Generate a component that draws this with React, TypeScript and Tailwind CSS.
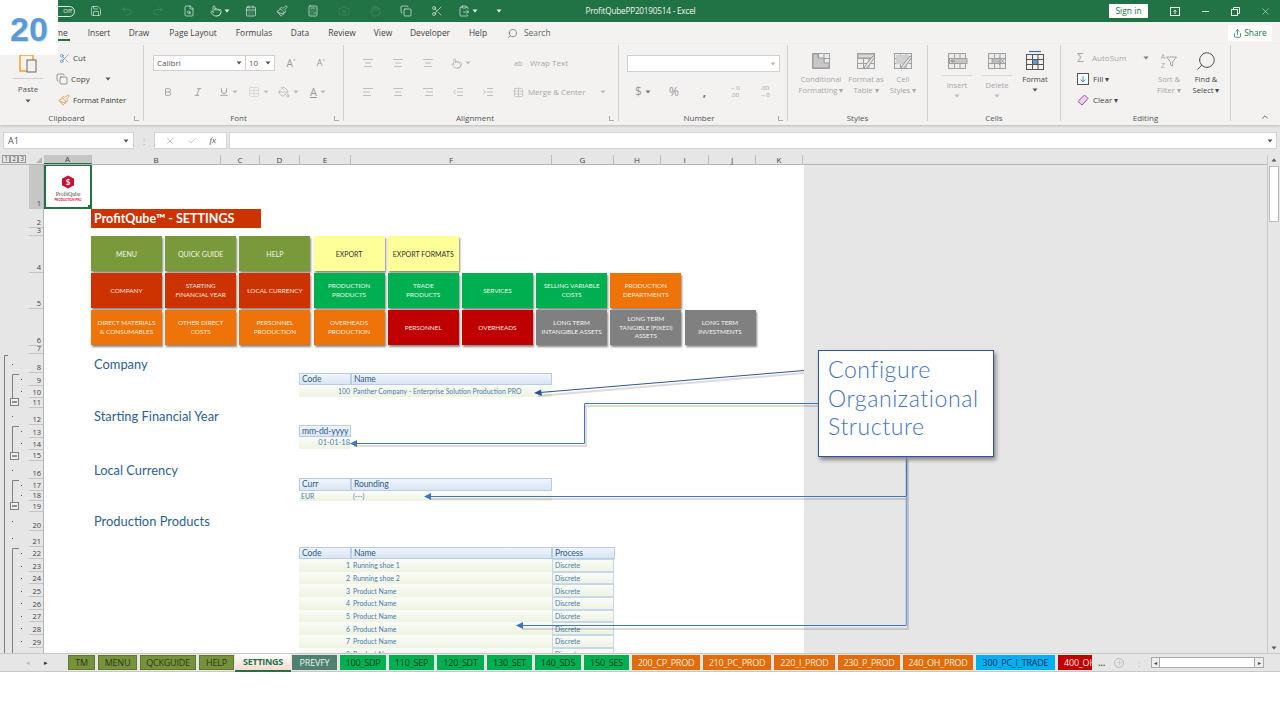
import React from "react";
import {
  Save, Undo2, Redo2, FileSearch, Pointer, CalendarDays, Paintbrush, Calculator, Camera, Hand, Copy, Scissors,
  ClipboardPaste, Search, Share, X, Check, AlignLeft, AlignCenter, AlignRight, Indent, Outdent,
  Table, Bold, Italic, Underline, PaintBucket, Plus, ChevronUp,
} from "lucide-react";

const Caret = ({ c = "#777" }: { c?: string }) => (
  <svg width="6" height="4" viewBox="0 0 6 4"><path d="M0.5 0.5h5L3 3.5z" fill={c} /></svg>
);

const qat: [React.ElementType, string][] = [
  [Save, "#e8f2ec"], [Undo2, "#4b8a68"], [Redo2, "#4b8a68"], [FileSearch, "#e8f2ec"], [Pointer, "#e8f2ec"],
  [CalendarDays, "#e8f2ec"], [Paintbrush, "#e8f2ec"], [Calculator, "#e8f2ec"], [Camera, "#4b8a68"], [Hand, "#4b8a68"],
  [Copy, "#e8f2ec"], [Scissors, "#e8f2ec"], [ClipboardPaste, "#e8f2ec"],
];

const ribbonTabs: [string, string][] = [
  ["Home", "w-[46px]"], ["Insert", "w-[40px]"], ["Draw", "w-[40px]"], ["Page Layout", "w-[68px]"], ["Formulas", "w-[54px]"],
  ["Data", "w-[38px]"], ["Review", "w-[46px]"], ["View", "w-[36px]"], ["Developer", "w-[58px]"], ["Help", "w-[38px]"],
];

const Grid = ({ children, stroke = "#a0a0a0", fill = "#ececec" }: { children?: React.ReactNode; stroke?: string; fill?: string }) => (
  <svg width="22" height="20" viewBox="0 0 22 20" fill="none" stroke={stroke} strokeWidth="1">
    <rect x="2.5" y="2.5" width="17" height="15" fill={fill} />
    <path d="M2.5 7.5h17M2.5 12.5h17M8.5 2.5v15M14 2.5v15" />
    {children}
  </svg>
);
const IconCond = () => <Grid><path d="M3 3h5v4h6v5h5v5H3z" fill="#c8c8c8" stroke="#9a9a9a" /></Grid>;
const IconTable = () => <Grid><path d="M3 3h16v4H3z" fill="#d8d8d8" /><path d="M20 6l-8 11-3 1 1-3 8-10z" fill="#e4e4e4" stroke="#9a9a9a" /></Grid>;
const IconCell = () => <Grid><path d="M4 4h13v9H4z" fill="#d0d0d0" stroke="none" /><path d="M20 6l-8 11-3 1 1-3 8-10z" fill="#e4e4e4" stroke="#9a9a9a" /></Grid>;
const IconInsert = () => <Grid><rect x="6" y="7.5" width="15" height="5" fill="#c4c4c4" /><path d="M9 10H2M4 8l-2 2 2 2" stroke="#8a8a8a" /></Grid>;
const IconDelete = () => <Grid><rect x="6" y="7.5" width="8" height="5" fill="#bcbcbc" /><path d="M13 6l7 8M20 6l-7 8" stroke="#9a9a9a" /></Grid>;
const IconFormat = () => (
  <svg width="22" height="22" viewBox="0 0 22 22" fill="none" stroke="#555" strokeWidth="1">
    <path d="M5 1.5h12" stroke="#2f75b5" strokeWidth="1.2" />
    <rect x="2.5" y="4.5" width="17" height="15" fill="#f3f2f1" />
    <rect x="8.5" y="9" width="5.5" height="5" fill="#5b9bd5" stroke="none" />
    <path d="M2.5 9.5h17M2.5 14.5h17M8.5 4.5v15M14 4.5v15" />
  </svg>
);

function Group({ w, label, launcher, pr = "", children }: { w: string; label: string; launcher?: boolean; pr?: string; children: React.ReactNode }) {
  return (
    <div className={`${w} flex h-[80px] shrink-0`}>
      <div className="flex-1 min-w-0 flex flex-col relative">
        <div className="flex-1 min-h-0 flex">{children}</div>
        <div className={`h-[13px] flex items-center justify-center text-[8px] text-[#555] ${pr}`}>{label}</div>
        {launcher && <span className="absolute right-[4px] bottom-[3px] w-[5px] h-[5px] border-l border-b border-[#aaa]" />}
      </div>
      <div className="w-px h-[76px] mt-[1px] bg-[#d2d0ce]" />
    </div>
  );
}

function Slot({ w = "w-[30px]", children }: { w?: string; children: React.ReactNode }) {
  return <div className={`${w} h-[16px] flex items-center justify-center gap-[3px] shrink-0 text-[#9a9a9a]`}>{children}</div>;
}

function BigCmd({ w, lines, children, dark, caretOnly }: { w: string; lines: string[]; children: React.ReactNode; dark?: boolean; caretOnly?: boolean }) {
  return (
    <div className={`${w} flex flex-col items-center shrink-0 pt-[7px] text-[7.6px] leading-[10.5px] ${dark ? "text-[#444]" : "text-[#a6a6a6]"}`}>
      <div className="h-[20px] flex items-center">{children}</div>
      <div className="mt-[3px] flex flex-col items-center whitespace-nowrap">
        {lines.map((l) => <span key={l}>{l}</span>)}
        {caretOnly && <span className="mt-[3px]"><Caret c={dark ? "#555" : "#bbb"} /></span>}
      </div>
    </div>
  );
}

const Ribbon = () => (
  <div className="h-[81px] bg-[#f3f2f1] flex pr-[8px] text-[#555] shadow-[0_1px_2px_#bbb] relative">
    <Group w="w-[144px]" label="Clipboard" launcher pr="pr-[10px]">
      <div className="w-[56px] flex flex-col items-center pt-[9px] text-[8px] text-[#555]">
        <svg width="20" height="20" viewBox="0 0 20 20" fill="none"><rect x="2" y="2" width="13" height="16" stroke="#e8a33d" strokeWidth="1.5" fill="#faf3e6" /><rect x="9" y="7" width="9" height="12" stroke="#666" fill="#f3f2f1" /></svg>
        <div className="w-[30px] border-t border-[#d2d0ce] mt-[5px]" />
        <span className="mt-[4px]">Paste</span>
        <span className="mt-[4px]"><Caret c="#555" /></span>
      </div>
      <div className="flex flex-col pt-[7px] text-[8px] text-[#444] gap-[7px]">
        <div className="h-[14px] flex items-center gap-[3px] pl-[3px]"><Scissors size={11} strokeWidth={1.3} color="#3a7ab8" /><span>Cut</span></div>
        <div className="h-[14px] flex items-center gap-[3px]"><Copy size={12} strokeWidth={1.2} color="#555" /><span>Copy</span><span className="ml-[12px]"><Caret c="#555" /></span></div>
        <div className="h-[14px] flex items-center gap-[3px] pl-[2px]"><Paintbrush size={12} strokeWidth={1.4} color="#d98a2b" /><span className="tracking-[-0.2px]">Format Painter</span></div>
      </div>
    </Group>
    <Group w="w-[200px]" label="Font" launcher pr="pr-[10px]">
      <div className="flex flex-col pl-[9px] pt-[11px]">
        <div className="flex items-center h-[16px]">
          <div className="w-[93px] h-[16px] bg-white border border-[#d0d0d0] flex items-center justify-between px-[3px] text-[8px] text-[#555]">Calibri<Caret c="#555" /></div>
          <div className="w-[29px] h-[16px] bg-white border border-l-0 border-[#d0d0d0] flex items-center justify-between px-[3px] text-[8px] text-[#555]">10<Caret c="#555" /></div>
          <div className="w-[1px]" />
          <Slot><span className="text-[10px]">A˄</span></Slot>
          <Slot><span className="text-[9px]">A˅</span></Slot>
        </div>
        <div className="flex items-center h-[16px] mt-[13px]">
          <Slot><Bold size={10} strokeWidth={2} /></Slot>
          <Slot><Italic size={10} /></Slot>
          <Slot><Underline size={10} /><Caret c="#bbb" /></Slot>
          <Slot><Table size={12} strokeWidth={1} color="#c5c5c5" /><Caret c="#bbb" /></Slot>
          <Slot><PaintBucket size={12} strokeWidth={1.2} /><Caret c="#bbb" /></Slot>
          <Slot><span className="text-[11px] underline">A</span><Caret c="#bbb" /></Slot>
        </div>
      </div>
    </Group>
    <Group w="w-[275px]" label="Alignment" launcher pr="pr-[12px]">
      <div className="flex flex-col pl-[9px] pt-[11px] text-[8px] text-[#a6a6a6]">
        <div className="flex items-center h-[16px]">
          <Slot><AlignCenter size={12} strokeWidth={1.2} /></Slot>
          <Slot><AlignCenter size={12} strokeWidth={1.2} /></Slot>
          <Slot><AlignCenter size={12} strokeWidth={1.2} /></Slot>
          <Slot w="w-[36px]"><Pointer size={11} strokeWidth={1.2} /><Caret c="#bbb" /></Slot>
          <div className="ml-[35px] flex items-center gap-[2px]"><span className="w-[14px] text-[7px] leading-[7px]">ab</span><span>Wrap Text</span></div>
        </div>
        <div className="flex items-center h-[16px] mt-[13px]">
          <Slot><AlignLeft size={12} strokeWidth={1.2} /></Slot>
          <Slot><AlignCenter size={12} strokeWidth={1.2} /></Slot>
          <Slot><AlignRight size={12} strokeWidth={1.2} /></Slot>
          <Slot><Outdent size={12} strokeWidth={1.2} /></Slot>
          <Slot><Indent size={12} strokeWidth={1.2} /></Slot>
          <div className="ml-[10px] flex items-center gap-[4px]"><Table size={11} strokeWidth={1.1} /><span className="tracking-[-0.1px]">Merge &amp; Center</span><span className="ml-[11px]"><Caret c="#bbb" /></span></div>
        </div>
      </div>
    </Group>
    <Group w="w-[169px]" label="Number" launcher pr="pr-[8px]">
      <div className="flex flex-col pl-[8px] pt-[11px]">
        <div className="w-[153px] h-[17px] bg-white border border-[#d0d0d0] flex items-center justify-end pr-[3px]"><Caret c="#bbb" /></div>
        <div className="flex items-center h-[16px] mt-[12px] text-[#a6a6a6] text-[12px]">
          <Slot w="w-[32px]"><span>$</span><Caret c="#777" /></Slot>
          <Slot w="w-[30px]"><span>%</span></Slot>
          <Slot w="w-[31px]"><span className="font-bold text-[#777]">,</span></Slot>
          <Slot w="w-[30px]"><span className="text-[6px] leading-[7px] text-center">←0<br />.00</span></Slot>
          <Slot w="w-[30px]"><span className="text-[6px] leading-[7px] text-center">.00<br />→0</span></Slot>
        </div>
      </div>
    </Group>
    <Group w="w-[140px]" label="Styles">
      <BigCmd w="w-[56px] ml-[5px]" lines={["Conditional", "Formatting ▾"]}><IconCond /></BigCmd>
      <BigCmd w="w-[34px]" lines={["Format as", "Table ▾"]}><IconTable /></BigCmd>
      <BigCmd w="w-[40px]" lines={["Cell", "Styles ▾"]}><IconCell /></BigCmd>
    </Group>
    <Group w="w-[133px]" label="Cells">
      <div className="w-[40px] ml-[9px] flex flex-col items-center pt-[7px] text-[7.6px] text-[#a6a6a6]">
        <IconInsert /><div className="w-[30px] border-t border-[#d8d8d8] mt-[4px]" /><span className="mt-[4px]">Insert</span><span className="mt-[3px]"><Caret c="#bbb" /></span>
      </div>
      <div className="w-[40px] flex flex-col items-center pt-[7px] text-[7.6px] text-[#a6a6a6]">
        <IconDelete /><div className="w-[30px] border-t border-[#d8d8d8] mt-[4px]" /><span className="mt-[4px]">Delete</span><span className="mt-[3px]"><Caret c="#bbb" /></span>
      </div>
      <BigCmd w="w-[36px]" lines={["Format"]} dark caretOnly><IconFormat /></BigCmd>
    </Group>
    <Group w="w-[170px]" label="Editing">
      <div className="w-[95px] pl-[16px] pt-[7px] flex flex-col gap-[7px] text-[8px]">
        <div className="h-[14px] flex items-center gap-[3px] text-[#a6a6a6]"><span className="text-[12px] w-[12px]">Σ</span><span>AutoSum</span><span className="ml-[14px]"><Caret c="#777" /></span></div>
        <div className="h-[14px] flex items-center gap-[4px] text-[#444]">
          <svg width="12" height="12" viewBox="0 0 12 12" fill="none"><rect x="0.5" y="0.5" width="11" height="11" stroke="#555" fill="#fff" /><path d="M6 3v6M3.5 6.5L6 9l2.5-2.5" stroke="#2f9ae0" /></svg>
          <span>Fill ▾</span>
        </div>
        <div className="h-[14px] flex items-center gap-[4px] text-[#444]">
          <svg width="12" height="12" viewBox="0 0 12 12" fill="none"><path d="M7.5 1l3.5 3.5-6 6.5L1 7.5z" fill="#efd6f0" stroke="#a349a4" /></svg>
          <span>Clear ▾</span>
        </div>
      </div>
      <BigCmd w="w-[26px]" lines={["Sort &", "Filter ▾"]}>
        <span className="flex items-center gap-[1px] text-[#a6a6a6]">
          <span className="text-[7px] leading-[9px] text-center">A<br />Z</span>
          <svg width="11" height="11" viewBox="0 0 11 11" fill="none" stroke="#a6a6a6"><path d="M0.5 1h10L6.5 6v4l-2-1V6z" /></svg>
        </span>
      </BigCmd>
      <BigCmd w="w-[48px]" lines={["Find &", "Select ▾"]} dark><Search size={22} strokeWidth={1} className="-scale-x-100" color="#444" /></BigCmd>
    </Group>
    <div className="flex-1 flex items-end justify-end pb-[3px] pr-[2px]"><ChevronUp size={10} color="#555" /></div>
  </div>
);

const colHeads: [string, string, boolean?][] = [
  ["A", "w-[48px]", true], ["B", "w-[129px]"], ["C", "w-[39px]"], ["D", "w-[40px]"], ["E", "w-[51px]"], ["F", "w-[201px]"],
  ["G", "w-[62px]"], ["H", "w-[47px]"], ["I", "w-[48px]"], ["J", "w-[47px]"], ["K", "w-[47px]"],
];

const rows: [string, string][] = [
  ["1", "h-[44px]"], ["2", "h-[19px]"], ["3", "h-[8px]"], ["4", "h-[36.5px]"], ["5", "h-[36.5px]"], ["6", "h-[36.5px]"], ["7", "h-[8.5px]"],
  ["8", "h-[19px]"], ["9", "h-[13px]"], ["10", "h-[12px]"], ["11", "h-[10px]"], ["12", "h-[17px]"], ["13", "h-[13px]"], ["14", "h-[12px]"],
  ["15", "h-[11px]"], ["16", "h-[18px]"], ["17", "h-[12px]"], ["18", "h-[10px]"], ["19", "h-[11px]"], ["20", "h-[19px]"], ["21", "h-[16px]"],
  ["22", "h-[12px]"], ["23", "h-[12.7px]"], ["24", "h-[12.7px]"], ["25", "h-[12.7px]"], ["26", "h-[12.7px]"], ["27", "h-[12.7px]"], ["28", "h-[12.7px]"], ["29", "h-[12.7px]"],
];

const Gutter = () => {
  const dots: [number, number][] = [
    [12, 364], [21, 379], [21, 391], [12, 416], [21, 431], [21, 443], [12, 470], [21, 485], [21, 495], [12, 521], [12, 538],
    [21, 553], [21, 566], [21, 578], [21, 591], [21, 603], [21, 616], [21, 628], [21, 641],
  ];
  const boxes = [398, 452, 502];
  const brackets: [number, number][] = [[374, 398], [426, 452], [480, 502]];
  return (
    <svg width="29" height="488" viewBox="0 165 29 488" className="shrink-0" fill="none" stroke="#808080">
      <path d="M8 355.5H4.5V653M19 548.5H12.5V653" />
      {brackets.map(([a, b]) => <path key={a} d={`M19 ${a}.5H12.5V${b}`} />)}
      {boxes.map((b) => (
        <g key={b}>
          <rect x="10.5" y={b + 0.5} width="8" height="7" fill="#f0f0f0" />
          <path d={`M12 ${b + 4}h5`} stroke="#333" />
        </g>
      ))}
      {dots.map(([x, y]) => <rect key={`${x}${y}`} x={x} y={y} width="1" height="1" fill="#555" stroke="none" />)}
    </svg>
  );
};

const NavBtn = ({ c, size, children }: { c: string; size: string; children: React.ReactNode }) => (
  <div className={`w-[71px] h-[35px] ${c} ${size} flex items-center justify-center pt-[1px] text-center leading-[8.6px] whitespace-nowrap shadow-[1px_2px_2px_#888] shrink-0`}>
    <span>{children}</span>
  </div>
);

const olive = "bg-[#7a993b] text-[#f2f5e6]";
const red = "bg-[#cc3300] text-[#fbe9df]";
const green = "bg-[#00b050] text-[#e6f8ed]";
const orange = "bg-[#ee7309] text-[#fdeedd]";
const dred = "bg-[#c00000] text-[#fbe6e6]";
const gray = "bg-[#808080] text-[#f2f2f2]";
const yellow = "bg-[#ffff99] text-[#333]";

const nav: [string, React.ReactNode][][] = [
  [[olive, "MENU"], [olive, "QUICK GUIDE"], [olive, "HELP"], [yellow, "EXPORT"], [yellow, "EXPORT FORMATS"]],
  [[red, "COMPANY"], [red, <>STARTING<br />FINANCIAL YEAR</>], [red, "LOCAL CURRENCY"], [green, <>PRODUCTION<br />PRODUCTS</>], [green, <>TRADE<br />PRODUCTS</>], [green, "SERVICES"], [green, <>SELLING VARIABLE<br />COSTS</>], [orange, <>PRODUCTION<br />DEPARTMENTS</>]],
  [[orange, <>DIRECT MATERIALS<br />&amp; CONSUMABLES</>], [orange, <>OTHER DIRECT<br />COSTS</>], [orange, <>PERSONNEL<br />PRODUCTION</>], [orange, <>OVERHEADS<br />PRODUCTION</>], [dred, "PERSONNEL"], [dred, "OVERHEADS"], [gray, <>LONG TERM<br />INTANGIBLE ASSETS</>], [gray, <>LONG TERM<br />TANGIBLE (FIXED)<br />ASSETS</>], [gray, <>LONG TERM<br />INVESTMENTS</>]],
];

const rowBg = "bg-gradient-to-b from-[#fbfcf8] to-[#eef3e2]";

const Head = ({ w, children, h = "h-[12px]" }: { w: string; children: React.ReactNode; h?: string }) => (
  <div className={`${w} ${h} bg-gradient-to-b from-[#f0f5fb] to-[#d9e5f4] border border-[#b8cce4] flex items-center pl-[2px] text-[8.6px] text-[#2f5f8a] shrink-0 overflow-hidden whitespace-nowrap tracking-[-0.15px]`}>{children}</div>
);

const Section = ({ children, mt }: { children: React.ReactNode; mt: string }) => (
  <div className={`${mt} ml-[50px] h-[16px] pt-[2px] flex items-center text-[12.9px] text-[#2f5f8f]`}>{children}</div>
);

const products = ["Running shoe 1", "Running shoe 2", "Product Name", "Product Name", "Product Name", "Product Name", "Product Name", "Product Name"];

const SheetBody = () => (
  <div className="w-[760px] h-[488px] bg-white overflow-hidden shrink-0 flex flex-col [font-family:Lato,sans-serif]">
    <div className="w-[48px] h-[45px] -mt-[1px] border-2 border-[#217346] flex flex-col items-center pt-[9px] relative shrink-0">
      <div className="w-[14px] h-[14px] relative flex items-center justify-center">
        <svg className="absolute inset-0" width="14" height="14" viewBox="0 0 14 14"><path d="M7 0.5l6 3.2v6.6l-6 3.2-6-3.2V3.7z" fill="#c8102e" /></svg>
        <span className="relative text-[8px] leading-none font-bold text-white">$</span>
      </div>
      <span className="text-[6px] leading-[8px] mt-[1px] text-[#555] tracking-[-0.2px] [font-family:'Liberation_Serif',serif]">ProfitQube</span>
      <span className="text-[3px] leading-[4px] font-bold text-[#d0103a] whitespace-nowrap">PRODUCTION PRO</span>
      <span className="absolute -right-[2px] -bottom-[2px] w-[4px] h-[4px] bg-[#217346]" />
    </div>
    <div className="ml-[47px] w-[170px] h-[19px] bg-[#cc3300] shrink-0 flex items-center pl-[3px] pt-[1px] text-white font-bold text-[12.5px]">ProfitQube™ - SETTINGS</div>
    <div className="ml-[47px] mt-[8px] flex flex-col gap-[2px] shrink-0">
      {nav.map((r, i) => (
        <div key={i} className="flex gap-[3.2px]">
          {r.map(([c, t], j) => <NavBtn key={j} c={c} size={i === 0 ? "text-[7px]" : "text-[6.4px]"}>{t}</NavBtn>)}
        </div>
      ))}
    </div>

    <Section mt="mt-[11px]">Company</Section>
    <div className="ml-[255px] mt-[1px] shrink-0">
      <div className="flex"><Head w="w-[52px]">Code</Head><Head w="w-[201px]">Name</Head></div>
      <div className={`w-[253px] h-[12px] flex items-center text-[6.9px] text-[#4a7cb0] whitespace-nowrap ${rowBg}`}>
        <span className="w-[52px] text-right pr-[1px]">100</span><span className="pl-[2px]">Panther Company - Enterprise Solution Production PRO</span>
      </div>
    </div>

    <Section mt="mt-[11px]">Starting Financial Year</Section>
    <div className="ml-[255px] mt-[1px] shrink-0">
      <Head w="w-[52px]">mm-dd-yyyy</Head>
      <div className={`w-[52px] h-[12px] flex items-center justify-end pr-[1px] text-[7.5px] text-[#4a7cb0] ${rowBg}`}>01-01-18</div>
    </div>

    <Section mt="mt-[13px]">Local Currency</Section>
    <div className="ml-[255px] shrink-0">
      <div className="flex"><Head w="w-[52px]" h="h-[13px]">Curr</Head><Head w="w-[201px]" h="h-[13px]">Rounding</Head></div>
      <div className={`w-[253px] h-[10px] flex items-center text-[6.9px] text-[#4a7cb0] ${rowBg}`}>
        <span className="w-[52px] pl-[2px]">EUR</span><span className="pl-[2px]">(---)</span>
      </div>
    </div>

    <Section mt="mt-[12px]">Production Products</Section>
    <div className="ml-[255px] mt-[18px] shrink-0">
      <div className="flex"><Head w="w-[52px]">Code</Head><Head w="w-[201px]">Name</Head><Head w="w-[63px]">Process</Head></div>
      {products.map((p, i) => (
        <div key={i} className="flex h-[12.7px] text-[6.9px] text-[#4a7cb0]">
          <div className={`w-[253px] flex items-center ${rowBg}`}>
            <span className="w-[52px] text-right pr-[1px]">{i + 1}</span><span className="pl-[2px]">{p}</span>
          </div>
          <div className={`w-[62px] flex items-center pl-[2px] border border-[#c6d7ec] ${rowBg}`}>Discrete</div>
        </div>
      ))}
    </div>
  </div>
);

const oliveTab = "bg-[#76923c] text-[#2e3a10] border border-[#5f7a2a]";
const tabs: [string, string, string][] = [
  ["TM", "w-[27px]", oliveTab], ["MENU", "w-[39px]", oliveTab], ["QCKGUIDE", "w-[56px]", oliveTab], ["HELP", "w-[35px]", oliveTab],
];
const gt = "bg-[#00b050] text-[#0b3b22]";
const ot = "bg-[#e36c0a] text-[#fdeedd]";
const tabs2: [string, string, string][] = [
  ["PREVFY", "w-[45px]", "bg-[#4f8070] text-[#e9f2ef]"], ["100_SDP", "w-[46px]", gt], ["110_SEP", "w-[45px]", gt],
  ["120_SDT", "w-[47px]", gt], ["130_SET", "w-[45px]", gt], ["140_SDS", "w-[46px]", gt],
  ["150_SES", "w-[45px]", gt], ["200_CP_PROD", "w-[68px]", ot], ["210_PC_PROD", "w-[68px]", ot],
  ["220_I_PROD", "w-[61px]", ot], ["230_P_PROD", "w-[62px]", ot], ["240_OH_PROD", "w-[70px]", ot],
  ["300_PC_I_TRADE", "w-[79px]", "bg-[#00b0f0] text-[#0b2e5c]"],
];

const Arrows = () => (
  <svg className="absolute inset-0 pointer-events-none" width="1280" height="720" viewBox="0 0 1280 720" fill="none">
    <g stroke="#000" strokeOpacity="0.14" strokeWidth="2" transform="translate(2 3)">
      <path d="M802 370L536 393M818 403H584V443H352M906 456V626H520M906 496H428" />
    </g>
    <path d="M804 370.5L540 392.5" stroke="#2f5597" />
    <polygon points="534,393 541,389.5 542,396" fill="#2f5597" />
    <path d="M818 403.5H584.5V443.5H355" stroke="#4472c4" />
    <polygon points="350,443.5 357,440 357,447" fill="#4472c4" />
    <path d="M906.5 457V496" stroke="#4472c4" strokeWidth="1.5" />
    <path d="M906.5 496V625.5" stroke="#7f9fd4" strokeWidth="1.5" />
    <path d="M906 496.5H430" stroke="#4472c4" />
    <polygon points="424,496.5 431,493 431,500" fill="#4472c4" />
    <path d="M906 625.5H522" stroke="#4472c4" />
    <polygon points="516,625.5 523,622 523,629" fill="#4472c4" />
  </svg>
);

export default function App() {
  return (
    <div className="relative w-[1280px] h-[720px] overflow-hidden bg-white text-[#444] [font-family:'Open_Sans','Noto_Sans',sans-serif]">
      {/* Title bar */}
      <div className="h-[22px] bg-[#217346] flex items-center">
        <div className="ml-[45px] w-[30px] h-[11px] rounded-full border border-[#dfeee6] flex items-center justify-end pr-[2px] text-[6px] text-[#e8f2ec]">Off</div>
        <div className="ml-[5.5px] flex items-center">
          {qat.map(([I, c], i) => (
            <div key={i} className="w-[31px] flex items-center justify-center gap-[2px]">
              <I size={12} strokeWidth={1.3} color={c} />
              {(i === 4 || i === 12) && <Caret c="#e8f2ec" />}
            </div>
          ))}
        </div>
        <div className="ml-[12px]"><Caret c="#e8f2ec" /></div>
        <span className="ml-[84px] text-[8.2px] text-[#f0f6f2] whitespace-nowrap tracking-[-0.2px]">ProfitQubePP20190514 - Excel</span>
        <div className="ml-auto flex items-center">
          <div className="w-[39px] h-[14px] bg-white flex items-center justify-center text-[8.5px] text-[#217346]">Sign in</div>
          <div className="w-[31px] ml-[11px] flex justify-center">
            <svg width="10" height="9" viewBox="0 0 10 9" fill="none" stroke="#e8f2ec"><rect x="0.5" y="0.5" width="9" height="8" /><path d="M5 7V3M3.5 4.5L5 3l1.5 1.5" /></svg>
          </div>
          <div className="w-[30px] flex justify-center"><span className="w-[7px] h-px bg-[#e8f2ec]" /></div>
          <div className="w-[30px] flex justify-center">
            <svg width="9" height="9" viewBox="0 0 9 9" fill="none" stroke="#e8f2ec"><rect x="0.5" y="2.5" width="6" height="6" /><path d="M2.5 2.5v-2h6v6h-2" /></svg>
          </div>
          <div className="w-[30px] flex justify-center"><X size={11} color="#e8f2ec" strokeWidth={1.2} /></div>
        </div>
      </div>

      {/* Ribbon tabs */}
      <div className="h-[22px] bg-[#f3f2f1] flex items-center pl-[33px] pr-[8px] text-[8.4px] text-[#444]">
        {ribbonTabs.map(([t, w], i) => (
          <div key={t} className={`${w} h-[22px] flex items-center justify-center relative`}>
            {t}
            {i === 0 && <span className="absolute bottom-[3px] right-[9px] w-[28px] h-[2px] bg-[#217346]" />}
          </div>
        ))}
        <Search size={11} strokeWidth={1.3} className="ml-[10px] -scale-x-100" color="#555" />
        <span className="ml-[6px] text-[#666]">Search</span>
        <div className="ml-auto w-[44px] h-[16px] bg-white flex items-center justify-center gap-[2px] text-[#217346]"><Share size={9} /><span>Share</span></div>
      </div>

      <Ribbon />

      {/* Formula bar */}
      <div className="h-[30px] bg-[#e6e6e6] flex items-center pl-[3px] pr-[3px] pt-[1px] text-[9px]">
        <div className="w-[131px] h-[17px] bg-white border border-[#d4d4d4] flex items-center justify-between px-[4px] text-[#555]">A1<Caret c="#555" /></div>
        <div className="w-[20px] flex justify-center text-[#aaa] text-[8px]">⋮</div>
        <div className="w-[73px] h-[17px] bg-white border border-[#d4d4d4] flex items-center justify-around px-[4px] text-[#bbb]">
          <X size={10} /><Check size={10} /><span className="italic text-[#555] [font-family:'Liberation_Serif',serif]">fx</span>
        </div>
        <div className="ml-[2px] flex-1 h-[17px] bg-white border border-[#d4d4d4] flex items-center justify-end pr-[3px]"><Caret c="#555" /></div>
      </div>

      {/* Column headings */}
      <div className="h-[10px] bg-[#e6e6e6] flex border-b border-[#b5b5b5]">
        <div className="w-[44px] flex items-start pl-[2px] relative shrink-0">
          {["1", "2", "3"].map((n) => (
            <span key={n} className="w-[8px] h-[8px] border border-[#999] flex items-center justify-center text-[6.5px] leading-none text-[#555]">{n}</span>
          ))}
          <svg className="absolute right-[2px] bottom-[1px]" width="6" height="6" viewBox="0 0 6 6"><path d="M6 0V6H0z" fill="#b5b5b5" /></svg>
        </div>
        {colHeads.map(([n, w, a]) => (
          <div key={n} className={`${w} flex items-center justify-center border-r border-[#bdbdbd] text-[8px] leading-none text-[#444] shrink-0 ${a ? "bg-[#c6c6c6] border-b border-b-[#217346]" : ""}`}>{n}</div>
        ))}
      </div>

      {/* Sheet */}
      <div className="h-[488px] flex bg-[#e6e6e6]">
        <Gutter />
        <div className="w-[15px] h-[488px] overflow-hidden shrink-0 border-r border-[#b5b5b5]">
          {rows.map(([n, h], i) => (
            <div key={n} className={`${h} flex items-end justify-end pr-[2px] border-b border-[#c4c4c4] text-[7.5px] leading-[9px] text-[#444] ${i === 0 ? "bg-[#c6c6c6]" : ""}`}>{n}</div>
          ))}
        </div>
        <SheetBody />
        <div className="flex-1 bg-[#e6e6e6]" />
        <div className="w-[13px] -mt-[10px] bg-[#e6e6e6] border-l border-[#c8c8c8] flex flex-col items-center shrink-0 relative">
          <div className="h-[10px] flex items-center"><svg width="6" height="4" viewBox="0 0 6 4"><path d="M3 0.5L5.5 3.5h-5z" fill="#555" /></svg></div>
          <div className="w-[10px] h-[56px] bg-white border border-[#bbb] mt-[1px]" />
          <div className="mt-auto h-[10px] flex items-center"><Caret c="#555" /></div>
        </div>
      </div>

      {/* Sheet tabs */}
      <div className="h-[19px] bg-[#e6e6e6] flex items-center pl-[17px] border-t border-[#c8c8c8] border-b text-[9px] leading-none tracking-[-0.2px] whitespace-nowrap">
        <span className="w-[21px] text-center text-[#bbb] text-[7px]">◂</span>
        <span className="w-[16px] text-center text-[#333] text-[7px]">▸</span>
        <div className="w-[14px]" />
        <div className="flex items-center gap-[3px]">
          {tabs.map(([t, w, c]) => <div key={t} className={`${w} h-[15px] ${c} flex items-center justify-center`}>{t}</div>)}
        </div>
        <div className="ml-[1px] w-[56px] h-[18px] bg-gradient-to-b from-white to-[#f9d9cf] border-b-2 border-b-[#217346] flex items-center justify-center font-bold text-[#217346] tracking-[-0.3px]">SETTINGS</div>
        <div className="flex items-center gap-[3px] ml-[1px]">
          {tabs2.map(([t, w, c]) => <div key={t} className={`${w} h-[15px] ${c} flex items-center justify-center shrink-0`}>{t}</div>)}
          <div className="w-[34px] h-[15px] bg-[#c00000] text-[#fbe6e6] overflow-hidden flex items-center pl-[6px]">400_OH</div>
        </div>
        <span className="ml-[6px] text-[#217346] font-bold">...</span>
        <div className="ml-[9px] w-[10px] h-[10px] rounded-full border border-[#bbb] flex items-center justify-center"><Plus size={7} color="#bbb" /></div>
        <span className="ml-[11px] text-[#bbb] text-[8px]">⋮</span>
        <div className="ml-[8px] flex h-[11px]">
          <div className="w-[9px] bg-[#eee] border border-[#aaa] flex items-center justify-center text-[6px] text-[#444]">◂</div>
          <div className="w-[94px] bg-white border-y border-[#aaa]" />
          <div className="w-[10px] bg-[#eee] border border-[#aaa] flex items-center justify-center text-[6px] text-[#444]">▸</div>
        </div>
      </div>

      <Arrows />

      {/* Callout */}
      <div className="absolute left-[818px] top-[350px] w-[176px] h-[107px] bg-white border border-[#2f5597] shadow-[2px_3px_4px_#888] pl-[9px] pt-[4px] text-[23px] leading-[28.5px] font-light text-[#4472c4] tracking-[0.6px] [font-family:Lato,sans-serif]">
        Configure<br />Organizational<br />Structure
      </div>

      {/* Slide number badge */}
      <div className="absolute left-0 top-0 w-[58px] h-[55px] bg-white flex items-center justify-center pt-[4px] text-[34px] font-bold text-[#5b9bd5] [font-family:'Liberation_Sans',sans-serif] [text-shadow:1px_1px_0_#cfe2f3]">20</div>
    </div>
  );
}
